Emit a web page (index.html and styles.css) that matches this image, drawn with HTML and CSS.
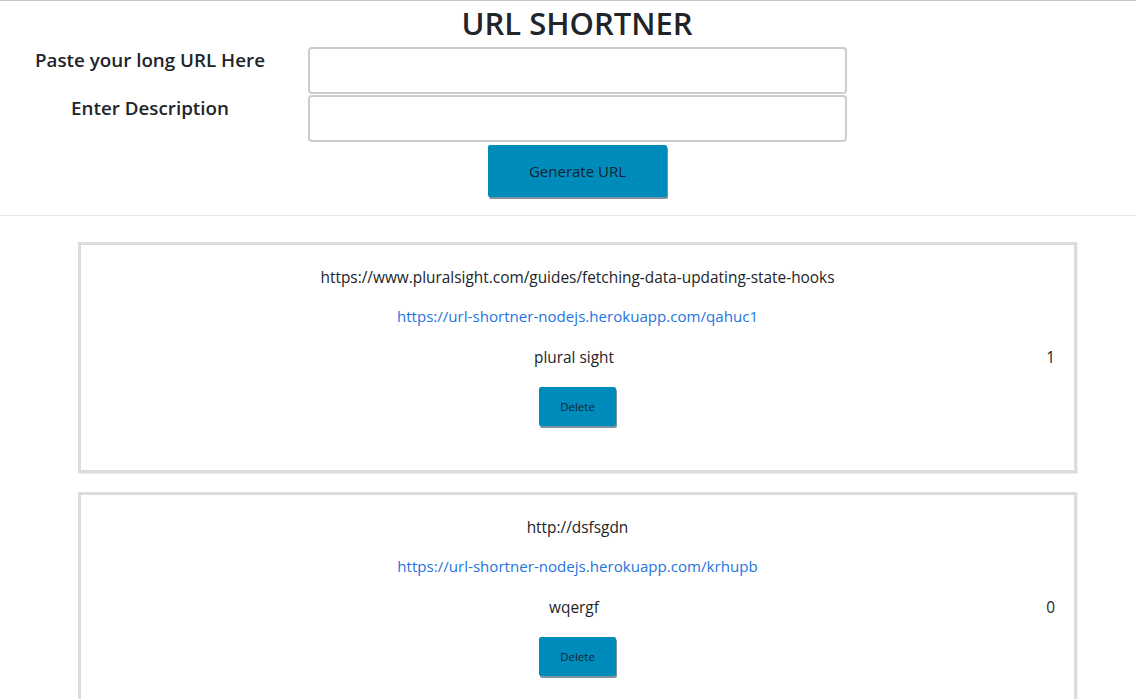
FILE: index.html
```html
<!DOCTYPE html>
<html lang="en">
<head>
<meta charset="utf-8">
<title>URL SHORTNER</title>
<link rel="stylesheet" href="styles.css">
</head>
<body>
<header class="header">
  <h1 class="title">URL SHORTNER</h1>
  <form class="form">
    <label class="label" for="long-url">Paste your long URL Here</label>
    <input class="input" id="long-url" type="text">
    <label class="label" for="desc">Enter Description</label>
    <input class="input" id="desc" type="text">
    <button class="btn btn-generate" type="button">Generate URL</button>
  </form>
</header>
<hr class="divider">
<main class="list">
  <section class="card">
    <p class="line">https://www.pluralsight.com/guides/fetching-data-updating-state-hooks</p>
    <p class="line line-short"><a class="link" href="#">https://url-shortner-nodejs.herokuapp.com/qahuc1</a></p>
    <div class="row">
      <span></span>
      <span class="desc">plural sight</span>
      <span class="count">1</span>
    </div>
    <button class="btn btn-delete" type="button">Delete</button>
  </section>
  <section class="card">
    <p class="line">http://dsfsgdn</p>
    <p class="line line-short"><a class="link" href="#">https://url-shortner-nodejs.herokuapp.com/krhupb</a></p>
    <div class="row">
      <span></span>
      <span class="desc">wqergf</span>
      <span class="count">0</span>
    </div>
    <button class="btn btn-delete" type="button">Delete</button>
  </section>
</main>
</body>
</html>
```
FILE: styles.css
```css
* { box-sizing: border-box; }

body {
  margin: 0;
  border-top: 1px solid #c4c4cc;
  font-family: "Open Sans", "Noto Sans", sans-serif;
  font-size: 15.4px;
  line-height: 24px;
  color: #212529;
  background: #fff;
}

.header {
  text-align: center;
}

.title {
  margin: 0 0 1px;
  font-size: 31px;
  line-height: 45px;
  font-weight: 600;
  padding-left: 18px;
}

.form {
  display: grid;
  grid-template-columns: 300px 539px;
  column-gap: 8px;
  row-gap: 1px;
  justify-content: start;
}

.label {
  font-size: 18.8px;
  font-weight: 600;
  line-height: 26px;
  text-align: center;
  align-self: start;
}

.input {
  grid-column: 2;
  height: 47px;
  border: 2px solid #cccccc;
  border-radius: 4px;
  font: inherit;
  padding: 0 10px;
  background: #fff;
}

.btn {
  background: #008cba;
  border: none;
  border-radius: 2px;
  box-shadow: 1px 2px 0 #7f929e;
  color: #142233;
  font-family: inherit;
  cursor: pointer;
}

.btn-generate {
  grid-column: 2;
  justify-self: center;
  width: 179px;
  height: 52px;
  margin-top: 2px;
  font-size: 15px;
}

.divider {
  margin: 18px 0 0;
  border: none;
  border-top: 1px solid #e8e8e8;
}

.list {
  width: 999px;
  margin: 26px 0 0 78px;
  display: flex;
  flex-direction: column;
  gap: 19px;
}

.card {
  border: 3px solid #dcdcdc;
  box-shadow: 1px 1px 1px rgba(0,0,0,0.06);
  padding: 21px 19px 44px;
  text-align: center;
  display: flex;
  flex-direction: column;
  align-items: center;
}

.line {
  margin: 0 0 14px;
}

.line-short {
  font-size: 15.1px;
  margin-bottom: 18px;
}

.link {
  color: #1f74e0;
  text-decoration: none;
}

.row {
  align-self: stretch;
  display: grid;
  grid-template-columns: 1fr auto 1fr;
}

.desc { padding-right: 7px; }

.count {
  justify-self: end;
}

.btn-delete {
  width: 77px;
  height: 39px;
  margin-top: 17px;
  font-size: 11.5px;
}
```
